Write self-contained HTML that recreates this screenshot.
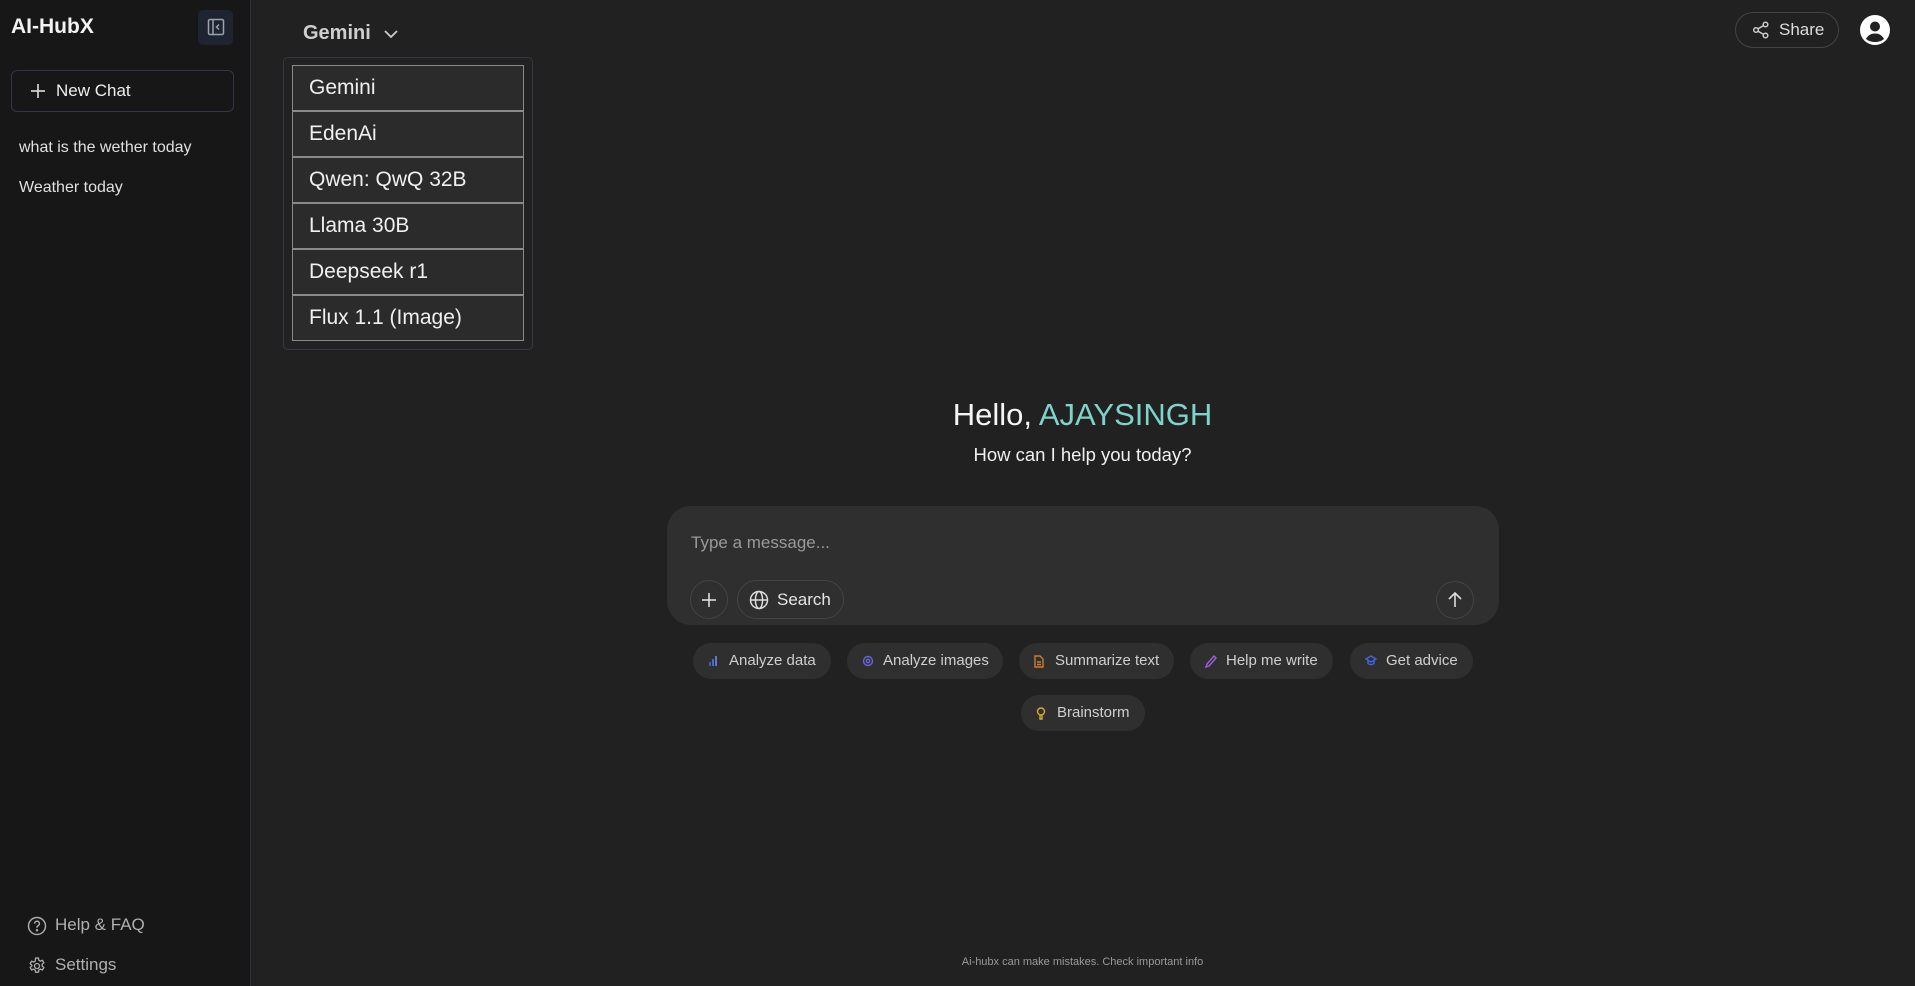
<!DOCTYPE html>
<html><head><meta charset="utf-8"><style>
*{box-sizing:border-box;margin:0;padding:0}
body{width:1915px;height:986px;background:#212121;font-family:"Liberation Sans",sans-serif;color:#e5e5e5;position:relative;overflow:hidden}
.a{position:absolute}
.sb{left:0;top:0;width:251px;height:986px;background:#171717;border-right:1px solid #2c3038}
.item{position:absolute;left:292px;width:232px;height:46px;background:#2b2b2b;border:1px solid #8a8a8a;font-size:21px;color:#f0f0f0;padding-left:16px;line-height:44px}
.chip{position:absolute;height:36px;top:643px;background:#2f2f2f;border-radius:18px;font-size:15px;color:#cfcfcf;line-height:36px;padding-left:36px}
.chip svg{position:absolute;left:15px;top:12px}
</style></head><body>
<div class="a sb"></div>
<div class="a" style="left:11px;top:15px;font-size:21px;font-weight:bold;color:#f2f2f2">AI-HubX</div>
<div class="a" style="left:198px;top:10px;width:35px;height:35px;background:#1e2531;border-radius:5px"></div>
<svg class="a" style="left:207px;top:18px" width="18" height="18" viewBox="0 0 18 18" fill="none" stroke="#9aa3ae" stroke-width="1.5"><rect x="1.5" y="1.5" width="15" height="15" rx="1.5"/><line x1="6" y1="1.5" x2="6" y2="16.5"/><path d="M12 6.5 9.5 9 12 11.5"/></svg>
<div class="a" style="left:11px;top:70px;width:223px;height:42px;border:1px solid #313744;border-radius:6px"></div>
<svg class="a" style="left:30px;top:83px" width="16" height="16" viewBox="0 0 16 16" stroke="#ddd" stroke-width="1.6"><line x1="8" y1="1" x2="8" y2="15"/><line x1="1" y1="8" x2="15" y2="8"/></svg>
<div class="a" style="left:56px;top:81px;font-size:17px;color:#eee">New Chat</div>
<div class="a" style="left:19px;top:139px;font-size:16px;color:#e0e0e0">what is the wether today</div>
<div class="a" style="left:19px;top:179px;font-size:16px;color:#e0e0e0">Weather today</div>
<svg class="a" style="left:27px;top:916px" width="20" height="20" viewBox="0 0 20 20" fill="none" stroke="#aaa" stroke-width="1.5"><circle cx="10" cy="10" r="8.5"/><path d="M7.6 7.6a2.4 2.4 0 1 1 3.3 2.2c-.6.3-.9.8-.9 1.4v.6"/><circle cx="10" cy="14.3" r=".5" fill="#aaa"/></svg>
<div class="a" style="left:55px;top:915px;font-size:17px;color:#b0b0b0">Help &amp; FAQ</div>
<svg class="a" style="left:27px;top:956px" width="20" height="20" viewBox="0 0 24 24" fill="none" stroke="#aaa" stroke-width="1.6"><path d="M10.3 2.5h3.4l.5 2.6 1.8 1 2.5-.9 1.7 2.9-2 1.8v2.1l2 1.8-1.7 2.9-2.5-.9-1.8 1-.5 2.6h-3.4l-.5-2.6-1.8-1-2.5.9-1.7-2.9 2-1.8V11l-2-1.8 1.7-2.9 2.5.9 1.8-1z"/><circle cx="12" cy="12" r="3"/></svg>
<div class="a" style="left:55px;top:955px;font-size:17px;color:#b0b0b0">Settings</div>

<div class="a" style="left:303px;top:22px;font-size:20px;font-weight:bold;color:#cfcfcf">Gemini</div>
<svg class="a" style="left:383px;top:28px" width="16" height="12" viewBox="0 0 16 12" fill="none" stroke="#ccc" stroke-width="1.8"><path d="M2 3l6 6 6-6"/></svg>
<div class="a" style="left:283px;top:57px;width:250px;height:293px;border:1px solid #343a44;border-radius:5px;background:#222"></div>
<div class="item" style="top:65px">Gemini</div>
<div class="item" style="top:111px">EdenAi</div>
<div class="item" style="top:157px">Qwen: QwQ 32B</div>
<div class="item" style="top:203px">Llama 30B</div>
<div class="item" style="top:249px">Deepseek r1</div>
<div class="item" style="top:295px">Flux 1.1 (Image)</div>

<div class="a" style="left:1735px;top:12px;width:104px;height:36px;border:1px solid #444;border-radius:18px"></div>
<svg class="a" style="left:1752px;top:21px" width="18" height="18" viewBox="0 0 18 18" fill="none" stroke="#ccc" stroke-width="1.5"><circle cx="13.5" cy="3.5" r="2.3"/><circle cx="4" cy="9" r="2.3"/><circle cx="13.5" cy="14.5" r="2.3"/><path d="M6 7.8l5.5-3.2M6 10.2l5.5 3.2"/></svg>
<div class="a" style="left:1779px;top:20px;font-size:17px;color:#ddd">Share</div>
<svg class="a" style="left:1860px;top:15px" width="30" height="30" viewBox="0 0 30 30"><circle cx="15" cy="15" r="15" fill="#fff"/><circle cx="15" cy="11.5" r="5" fill="#212121"/><path d="M6 24c2-4 5.5-5.5 9-5.5s7 1.5 9 5.5c-2.5 2-5.5 3-9 3s-6.5-1-9-3z" fill="#212121"/></svg>

<div class="a" style="left:600px;width:965px;top:397px;text-align:center;font-size:31px;color:#f5f5f5">Hello, <span style="color:#7fd3c9">AJAYSINGH</span></div>
<div class="a" style="left:600px;width:965px;top:444px;text-align:center;font-size:18.5px;color:#f0f0f0">How can I help you today?</div>

<div class="a" style="left:667px;top:506px;width:832px;height:119px;background:#2f2f2f;border-radius:24px"></div>
<div class="a" style="left:691px;top:533px;font-size:17px;color:#9a9a9a">Type a message...</div>
<div class="a" style="left:690px;top:580px;width:38px;height:39px;border:1px solid #444;border-radius:50%"></div>
<svg class="a" style="left:701px;top:592px" width="16" height="16" viewBox="0 0 16 16" stroke="#ddd" stroke-width="1.6"><line x1="8" y1="1" x2="8" y2="15"/><line x1="1" y1="8" x2="15" y2="8"/></svg>
<div class="a" style="left:737px;top:580px;width:107px;height:39px;border:1px solid #444;border-radius:20px"></div>
<svg class="a" style="left:749px;top:590px" width="20" height="20" viewBox="0 0 20 20" fill="none" stroke="#ddd" stroke-width="1.5"><circle cx="10" cy="10" r="8.5"/><ellipse cx="10" cy="10" rx="3.6" ry="8.5"/><path d="M1.5 10h17"/></svg>
<div class="a" style="left:777px;top:590px;font-size:17px;color:#e5e5e5">Search</div>
<div class="a" style="left:1436px;top:581px;width:38px;height:38px;border:1px solid #444;border-radius:50%"></div>
<svg class="a" style="left:1447px;top:591px" width="16" height="18" viewBox="0 0 16 18" fill="none" stroke="#ddd" stroke-width="1.6"><path d="M8 16V2M2 8l6-6 6 6"/></svg>

<div class="chip" style="left:693px;width:138px"><svg width="10" height="12" viewBox="0 0 10 12"><rect x="1" y="7" width="2" height="4" fill="#3b5bb5"/><rect x="4" y="4" width="2" height="7" fill="#4a68c5"/><rect x="7" y="1" width="2" height="10" fill="#5a78d5"/></svg>Analyze data</div>
<div class="chip" style="left:847px;width:156px"><svg width="12" height="12" viewBox="0 0 12 12" fill="none" stroke="#6b62e0" stroke-width="1.4"><circle cx="6" cy="6" r="4.5"/><circle cx="6" cy="6" r="1.7"/></svg>Analyze images</div>
<div class="chip" style="left:1019px;width:155px"><svg width="10" height="13" viewBox="0 0 10 13" fill="none" stroke="#d07a2e" stroke-width="1.4"><path d="M1 1h5l3 3v8H1z"/><path d="M3 7h4M3 9.5h4"/></svg>Summarize text</div>
<div class="chip" style="left:1190px;width:143px"><svg width="12" height="13" viewBox="0 0 12 13" fill="none" stroke="#a25be0" stroke-width="1.4"><path d="M9 1l2 2-7 8-3 1 1-3z"/></svg>Help me write</div>
<div class="chip" style="left:1350px;width:123px"><svg width="12" height="11" viewBox="0 0 12 11" fill="none" stroke="#3f66e0" stroke-width="1.4"><path d="M1 4l5-3 5 3-5 3z"/><path d="M3 5.5v3c2 1.5 4 1.5 6 0v-3"/></svg>Get advice</div>
<div class="chip" style="left:1021px;top:695px;width:124px"><svg width="10" height="13" viewBox="0 0 10 13" fill="none" stroke="#d8a930" stroke-width="1.4"><circle cx="5" cy="4.5" r="3.5"/><path d="M4 8v4h2V8"/></svg>Brainstorm</div>

<div class="a" style="left:600px;width:965px;top:956px;text-align:center;font-size:11px;color:#9a9a9a">Ai-hubx can make mistakes. Check important info</div>
</body></html>
